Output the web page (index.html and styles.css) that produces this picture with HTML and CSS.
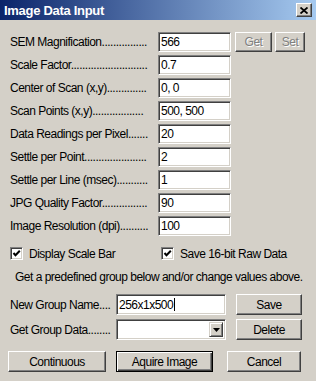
FILE: index.html
```html
<!DOCTYPE html>
<html lang="en">
<head>
  <meta charset="UTF-8">
  <title>Image Data Input</title>
  <link rel="stylesheet" href="styles.css">
</head>
<body>
  <div class="dialog">
    <div class="titlebar">
      <span class="title">Image Data Input</span>
      <span class="close">
        <svg width="8" height="7" viewBox="0 0 8 7"><path d="M0.5 0.5 L7.5 6.5 M7.5 0.5 L0.5 6.5" stroke="#000" stroke-width="1.8"/></svg>
      </span>
    </div>

    <div class="content">
      <div class="row">
        <span class="label">SEM Magnification................</span>
        <span class="field">566</span>
        <span class="btn get disabled">Get</span>
        <span class="btn set disabled">Set</span>
      </div>
      <div class="row">
        <span class="label">Scale Factor...........................</span>
        <span class="field">0.7</span>
      </div>
      <div class="row">
        <span class="label">Center of Scan (x,y)..............</span>
        <span class="field">0, 0</span>
      </div>
      <div class="row">
        <span class="label">Scan Points (x,y)..................</span>
        <span class="field">500, 500</span>
      </div>
      <div class="row">
        <span class="label">Data Readings per Pixel.......</span>
        <span class="field">20</span>
      </div>
      <div class="row">
        <span class="label">Settle per Point......................</span>
        <span class="field">2</span>
      </div>
      <div class="row">
        <span class="label">Settle per Line (msec)...........</span>
        <span class="field">1</span>
      </div>
      <div class="row">
        <span class="label">JPG Quality Factor................</span>
        <span class="field">90</span>
      </div>
      <div class="row">
        <span class="label">Image Resolution (dpi)..........</span>
        <span class="field">100</span>
      </div>

      <div class="checks">
        <label class="check first">
          <span class="box"><svg width="9" height="9" viewBox="0 0 9 9"><path d="M1.5 4 L3.5 6.3 L7.8 1.8" fill="none" stroke="#000" stroke-width="2"/></svg></span>
          Display Scale Bar
        </label>
        <label class="check">
          <span class="box"><svg width="9" height="9" viewBox="0 0 9 9"><path d="M1.5 4 L3.5 6.3 L7.8 1.8" fill="none" stroke="#000" stroke-width="2"/></svg></span>
          Save 16-bit Raw Data
        </label>
      </div>

      <p class="note">Get a predefined group below and/or change values above.</p>

      <div class="group-row">
        <span class="group-label">New Group Name....</span>
        <span class="field wide">256x1x500<span class="caret"></span></span>
        <span class="btn side">Save</span>
      </div>
      <div class="group-row second">
        <span class="group-label">Get Group Data........</span>
        <span class="field wide select">
          <span class="drop">
            <svg width="7" height="4" viewBox="0 0 7 4"><path d="M0 0 H7 L3.5 4 Z" fill="#000"/></svg>
          </span>
        </span>
        <span class="btn side">Delete</span>
      </div>

      <div class="actions">
        <span class="btn continuous">Continuous</span>
        <span class="btn default acquire">Aquire Image</span>
        <span class="btn cancel">Cancel</span>
      </div>
    </div>
  </div>
</body>
</html>
```

FILE: styles.css
```css
body {
  margin: 0;
  background-color: #d4d0c8;
  font-family: "Liberation Sans", Arial, sans-serif;
  font-size: 12px;
  letter-spacing: -0.5px;
  color: #000;
}

.dialog {
  width: 316px;
  height: 381px;
  background-color: #d4d0c8;
  overflow: hidden;
}

/* title bar */
.titlebar {
  height: 20px;
  padding: 0 4px 0 4px;
  display: flex;
  align-items: center;
  justify-content: space-between;
  background: linear-gradient(to right, #0a246a, #a6caf0);
}

.title {
  color: white;
  font-weight: bold;
  font-size: 13px;
  letter-spacing: -0.3px;
}

.close {
  width: 16px;
  height: 14px;
  box-sizing: border-box;
  display: flex;
  align-items: center;
  justify-content: center;
  background-color: #d4d0c8;
  border: 1px solid;
  border-color: #fff #404040 #404040 #fff;
  box-shadow: inset -1px -1px #808080;
}

.content {
  padding: 12px 0 0 10px;
}

/* field rows */
.row {
  display: flex;
  align-items: center;
  height: 20px;
  margin-bottom: 3px;
}

.label {
  width: 140px;
  white-space: nowrap;
}

.field {
  margin-left: 8px;
  width: 73px;
  height: 20px;
  box-sizing: border-box;
  padding-left: 2px;
  display: flex;
  align-items: center;
  background-color: white;
  border: 1px solid;
  border-color: #808080 #fff #fff #808080;
  box-shadow: inset 1px 1px #404040, inset -1px -1px #d4d0c8;
  white-space: nowrap;
}

/* buttons */
.btn {
  height: 20px;
  box-sizing: border-box;
  display: flex;
  align-items: center;
  justify-content: center;
  background-color: #d4d0c8;
  border: 1px solid;
  border-color: #fff #404040 #404040 #fff;
  box-shadow: inset -1px -1px #808080;
}

.btn.disabled {
  color: #808080;
  text-shadow: 1px 1px 0 #fff;
}

.get {
  margin-left: 4px;
  width: 37px;
}

.set {
  margin-left: 3px;
  width: 30px;
}

.btn.default {
  border-color: #000;
  box-shadow: inset 1px 1px #fff, inset -1px -1px #404040, inset -2px -2px #808080;
}

/* check boxes */
.checks {
  display: flex;
  margin-top: 11px;
  height: 13px;
}

.check {
  display: flex;
  align-items: center;
  gap: 6px;
  white-space: nowrap;
}

.check.first {
  width: 151px;
}

.box {
  width: 13px;
  height: 13px;
  box-sizing: border-box;
  display: flex;
  align-items: center;
  justify-content: center;
  background-color: white;
  border: 1px solid;
  border-color: #808080 #fff #fff #808080;
  box-shadow: inset 1px 1px #404040, inset -1px -1px #d4d0c8;
}

.note {
  margin: 10px 0 0 5px;
  line-height: 14px;
  white-space: nowrap;
}

/* group rows */
.group-row {
  display: flex;
  align-items: center;
  height: 21px;
  margin-top: 10px;
}

.group-row.second {
  margin-top: 4px;
}

.group-label {
  width: 106px;
  white-space: nowrap;
}

.field.wide {
  margin-left: 0;
  width: 110px;
  height: 21px;
}

.caret {
  display: inline-block;
  width: 1px;
  height: 13px;
  margin-left: 1px;
  background-color: #000;
}

.select {
  justify-content: flex-end;
  padding: 0 2px 0 0;
}

.drop {
  width: 14px;
  height: 15px;
  box-sizing: border-box;
  display: flex;
  align-items: center;
  justify-content: center;
  background-color: #d4d0c8;
  border: 1px solid;
  border-color: #d4d0c8 #404040 #404040 #d4d0c8;
  box-shadow: inset 1px 1px #fff, inset -1px -1px #808080;
}

.btn.side {
  margin-left: 10px;
  width: 66px;
  height: 21px;
}

/* bottom buttons */
.actions {
  display: flex;
  margin-top: 11px;
}

.actions .btn {
  height: 21px;
}

.continuous {
  margin-left: -2px;
  width: 98px;
}

.acquire {
  margin-left: 10px;
  width: 97px;
}

.cancel {
  margin-left: 14px;
  width: 74px;
}
```
